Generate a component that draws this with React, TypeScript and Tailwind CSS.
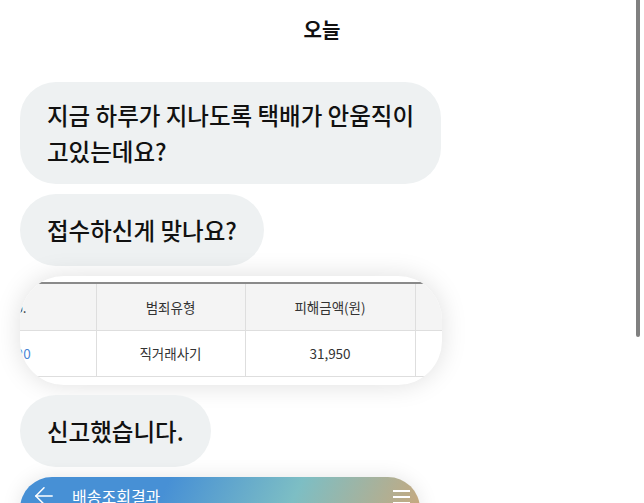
import React from 'react';
import { ArrowLeft } from 'lucide-react';

const font = { fontFamily: '"Noto Sans CJK KR", "Noto Sans", sans-serif' };

const Bubble: React.FC<{ children: React.ReactNode }> = ({ children }) => (
  <div className="flex min-h-[72px] items-center self-start rounded-[36px] bg-[#eef1f2] px-[27px] py-[15px] text-[23.5px] font-medium leading-[36px] text-[#111]">
    <p>{children}</p>
  </div>
);

const App: React.FC = () => {
  return (
    <div className="relative h-[503px] w-[644px] overflow-hidden bg-white" style={font}>
      <div className="flex h-[60px] items-center justify-center">
        <span className="text-[20px] font-bold text-[#111]">오늘</span>
      </div>

      <div className="flex flex-col gap-[10px] px-[20px] pt-[22px]">
        <Bubble>
          지금 하루가 지나도록 택배가 안움직이
          <br />
          고있는데요?
        </Bubble>
        <Bubble>접수하신게 맞나요?</Bubble>

        <div className="w-[422px] overflow-hidden rounded-[44px] bg-white pt-[6px] pb-[8px] shadow-[0_0_26px_rgba(0,0,0,0.13)]">
          <table className="ml-[-84px] w-[599px] table-fixed border-collapse text-[13.5px] text-[#333]">
            <thead>
              <tr className="h-[47px] border-t-2 border-[#8a8a8a] bg-[#f4f4f4]">
                <th className="w-[160px] border-r border-b border-[#dedede] font-normal">No.</th>
                <th className="w-[149px] border-r border-b border-[#dedede] font-normal">범죄유형</th>
                <th className="w-[170px] border-r border-b border-[#dedede] font-normal">피해금액(원)</th>
                <th className="w-[120px] border-b border-[#dedede] font-normal" />
              </tr>
            </thead>
            <tbody>
              <tr className="h-[46px]">
                <td className="border-r border-b border-[#dedede] text-center text-[#4a86d4]">2020</td>
                <td className="border-r border-b border-[#dedede] text-center">직거래사기</td>
                <td className="border-r border-b border-[#dedede] text-center">31,950</td>
                <td className="border-b border-[#dedede]" />
              </tr>
            </tbody>
          </table>
        </div>

        <Bubble>신고했습니다.</Bubble>

        <div className="flex h-[64px] w-[400px] items-start rounded-[40px] bg-[linear-gradient(115deg,#4790d5_35%,#7dbec4_66%,#cfa676)] pl-[10px] pr-[10px] pt-[5px] shadow-[0_0_20px_rgba(0,0,0,0.1)]">
          <ArrowLeft size={28} strokeWidth={1.3} className="text-white" />
          <span className="ml-[14px] text-[16px] leading-[28px] text-white">배송조회결과</span>
          <div className="ml-auto mt-[8px] flex w-[17px] flex-col gap-[4px]">
            <span className="h-[2px] bg-white" />
            <span className="h-[2px] bg-white" />
            <span className="h-[2px] bg-white" />
          </div>
        </div>
      </div>

      <div className="absolute right-[4px] top-0 h-[337px] w-[4px] rounded-b-full bg-[#808080]" />
    </div>
  );
};

export default App;
